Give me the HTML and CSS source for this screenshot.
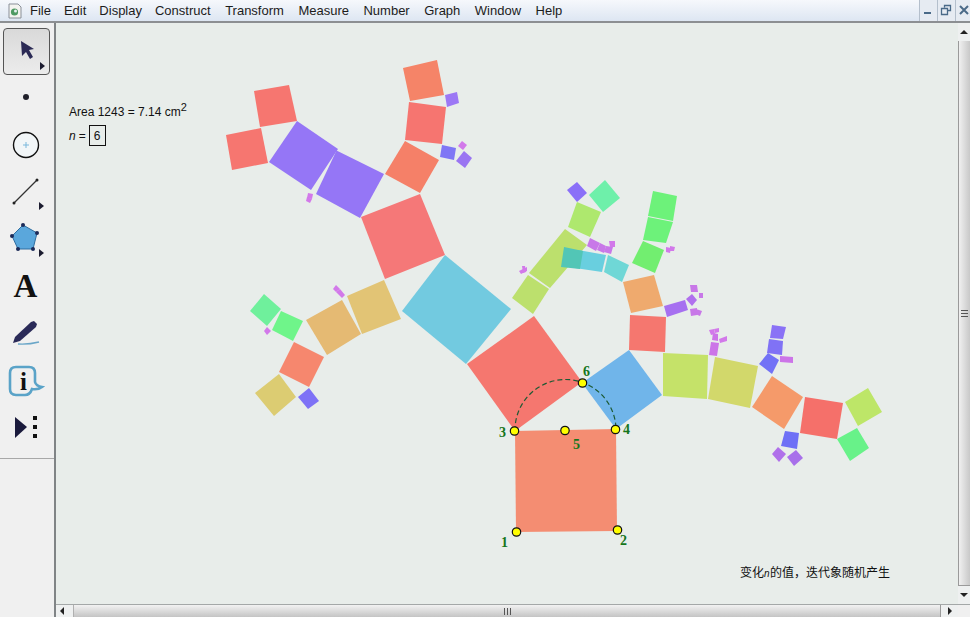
FILE: index.html
```html
<!DOCTYPE html>
<html lang="en">
<head>
    <meta charset="UTF-8">
    <title>Sketchpad</title>
    <link rel="stylesheet" href="styles.css">
</head>
<body>
    <div class="app">
        <div class="menubar">
            <svg class="app-icon" viewBox="0 0 14 16">
                <path d="M1 1H10L13 4V15H1Z" fill="#f4f4f0" stroke="#8a8f98"/>
                <circle cx="6.5" cy="9" r="3.6" fill="#4f9a62"/>
                <circle cx="7.5" cy="8" r="1.5" fill="#e8f0f0"/>
            </svg>
            <div class="menu">
                <span>File</span><span>Edit</span><span>Display</span><span>Construct</span><span>Transform</span><span>Measure</span><span>Number</span><span>Graph</span><span>Window</span><span>Help</span>
            </div>
            <div class="win-buttons">
                <div class="win-btn">
                    <svg viewBox="0 0 18 20"><rect x="5" y="12" width="7" height="2" fill="#4a6a88"/></svg>
                </div>
                <div class="win-btn">
                    <svg viewBox="0 0 18 20"><path d="M7.5 7.5V5.5H13.5V10.5H11M4.5 8.5H10.5V14.5H4.5Z" fill="none" stroke="#4a6a88" stroke-width="1.3"/></svg>
                </div>
                <div class="win-btn">
                    <svg viewBox="0 0 18 20"><path d="M5 6L13 14M13 6L5 14" fill="none" stroke="#4a6a88" stroke-width="2"/></svg>
                </div>
            </div>
        </div>

        <div class="main">
            <div class="toolbar">
                <div class="tools">
                    <div class="tool selected">
                        <svg viewBox="0 0 47 47">
                            <polygon points="18,13 19,28 23,24 27,31 30,29 26,22 31,21" fill="#2b2a55"/>
                            <polygon points="37,34 42,38 37,42" fill="#1c1c30"/>
                        </svg>
                    </div>
                    <div class="tool">
                        <svg viewBox="0 0 47 47"><circle cx="23" cy="22" r="3" fill="#20202a"/></svg>
                    </div>
                    <div class="tool">
                        <svg viewBox="0 0 47 47">
                            <circle cx="23" cy="23" r="12.5" fill="#f2f6f8" stroke="#111" stroke-width="1.4"/>
                            <path d="M23 20V26M20 23H26" stroke="#7ab8dc" stroke-width="1"/>
                        </svg>
                    </div>
                    <div class="tool">
                        <svg viewBox="0 0 47 47">
                            <path d="M11 34L34 11" stroke="#333" stroke-width="1.2"/>
                            <circle cx="11" cy="34" r="1.5" fill="#222"/>
                            <circle cx="34" cy="11" r="1.5" fill="#222"/>
                            <polygon points="36,33 41,37 36,41" fill="#1c1c30"/>
                        </svg>
                    </div>
                    <div class="tool">
                        <svg viewBox="0 0 47 47">
                            <polygon points="20,9 34,17 30,33 15,33 9,20" fill="#5aa7dc" stroke="#2e6da0"/>
                            <circle cx="20" cy="9" r="2" fill="#1c2a58"/>
                            <circle cx="34" cy="17" r="2" fill="#1c2a58"/>
                            <circle cx="30" cy="33" r="2" fill="#1c2a58"/>
                            <circle cx="15" cy="33" r="2" fill="#1c2a58"/>
                            <circle cx="9" cy="20" r="2" fill="#1c2a58"/>
                            <polygon points="36,33 41,37 36,41" fill="#1c1c30"/>
                        </svg>
                    </div>
                    <div class="tool text-tool">A</div>
                    <div class="tool">
                        <svg viewBox="0 0 47 47">
                            <polygon points="10,33 12,27 28,12 31,11 34,14 33,17 17,31" fill="#2a2a58"/>
                            <path d="M15 34C22 34.500 28 34 36 32" fill="none" stroke="#6aa6c8" stroke-width="1.4"/>
                        </svg>
                    </div>
                    <div class="tool">
                        <svg viewBox="0 0 47 47">
                            <path d="M13 10H26Q32 10 32 16V25Q33 29 39 30Q35 33 29 32Q27 38 22 38H13Q7 38 7 32V16Q7 10 13 10Z" fill="none" stroke="#5aa3c8" stroke-width="2.6"/>
                            <text x="17" y="33" class="info-i">i</text>
                        </svg>
                    </div>
                    <div class="tool">
                        <svg viewBox="0 0 47 47">
                            <polygon points="12,13 24,23 12,34" fill="#1a1a3c"/>
                            <rect x="30" y="12" width="4" height="4" fill="#111"/>
                            <rect x="30" y="21" width="4" height="4" fill="#111"/>
                            <rect x="30" y="30" width="4" height="4" fill="#111"/>
                        </svg>
                    </div>
                </div>
            </div>

            <div class="work">
                <div class="work-row">
                    <div class="canvas">
                        <svg class="sketch" viewBox="56 23 902 581">
                            <!-- bottom square and the two on top of it -->
                            <polygon fill="#f48d72" points="515,431 616,429 617,531 516,532"/>
                            <polygon fill="#f5776f" points="534,316 582,382 515,431 467,364"/>
                            <polygon fill="#70b5ea" points="582,383 629,350 662,395 616,429"/>

                            <!-- left branch -->
                            <polygon fill="#72cae0" points="445,255 511,309 466,364 402,311"/>
                            <polygon fill="#f57878" points="361,217 420,194 445,255 385,279"/>
                            <polygon fill="#9576f6" points="297,121 338,149 311,190 269,162"/>
                            <polygon fill="#9576f6" points="336.500,150.500 384,174 360,218 316,194"/>
                            <polygon fill="#f58068" points="385,174 405,141 439,160 420,193"/>
                            <polygon fill="#f67570" points="409,102 446,107 442,144 405,140"/>
                            <polygon fill="#f58468" points="403,68 437,60 444,95 410,101"/>
                            <polygon fill="#9c78f5" points="445,95 457,92 459,103 447,107"/>
                            <polygon fill="#7f76f5" points="442,145 456,148 454,160 440,157"/>
                            <polygon fill="#9a75f2" points="464,151 472,158 465,168 456,161"/>
                            <polygon fill="#d279ea" points="462,141 467,145 463,150 458,146"/>
                            <polygon fill="#f67670" points="254,91 289,85 297,121 260,127"/>
                            <polygon fill="#f67670" points="226,135 261,128 268,163 232,170"/>
                            <polygon fill="#d279ea" points="308,193 313,194 312,199 307,198"/>
                            <polygon fill="#d279ea" points="307,197 312,199 310,203 306,201"/>

                            <!-- gold branch -->
                            <polygon fill="#e2c475" points="384,280 401,319 362,334 347,296"/>
                            <polygon fill="#e5ba73" points="342,300 361,334 327,355 306,320"/>
                            <polygon fill="#f6876e" points="294,342 324,357 309,387 279,372"/>
                            <polygon fill="#dccc72" points="279,374 296,397 274,416 255,393"/>
                            <polygon fill="#7e72f6" points="309,388 319,401 308,409 298,397"/>
                            <polygon fill="#6ff09c" points="264,294 281,309 267,326 250,311"/>
                            <polygon fill="#6ff58a" points="281,311 303,321 293,341 272,330"/>
                            <polygon fill="#d279ea" points="267,327 271,331 267,335 264,331"/>
                            <polygon fill="#d279ea" points="336,285 340,289 336,292 333,289"/>
                            <polygon fill="#d279ea" points="340,289 345,295 342,298 336,292"/>

                            <!-- right branch, upper part -->
                            <polygon fill="#bce06d" points="512,298 528,275 549,289 533,314"/>
                            <polygon fill="#bce06d" points="529,273 565,229 587,245 550,288"/>
                            <polygon fill="#aee86e" points="577,202 601,212 590,237 568,227"/>
                            <polygon fill="#6ef0aa" points="589,195 605,180 620,198 603,212"/>
                            <polygon fill="#8a70f8" points="567,190 577,182 587,193 577,202"/>
                            <polygon fill="#69cfdf" points="578,250 606,255 602,272 575,268"/>
                            <polygon fill="#52c6b6" points="564,247 583,251 580,269 561,267"/>
                            <polygon fill="#6fd7d6" points="608,255 629,265 622,282 604,272"/>
                            <polygon fill="#6df27a" points="653,191 677,196 673,221 648,216"/>
                            <polygon fill="#6df27a" points="648,217 673,222 666,243 643,240"/>
                            <polygon fill="#72ee70" points="643,241 664,250 655,273 632,263"/>
                            <polygon fill="#efaa6e" points="623,282 654,275 663,306 631,313"/>
                            <polygon fill="#f5776f" points="630,315 666,317 665,352 629,350"/>
                            <polygon fill="#a670f0" points="664,306 685,300 688,310 667,317"/>
                            <polygon fill="#b070ee" points="686,299 692,294 697,300 692,306"/>
                            <polygon fill="#c878e8" points="690,285 697,285 698,292 691,292"/>
                            <polygon fill="#c878e8" points="699,293 703,293 703,298 699,298"/>
                            <polygon fill="#c878e8" points="690,309 697,308 697,315 691,316"/>
                            <polygon fill="#c878e8" points="696,309 702,311 700,316 695,314"/>
                            <polygon fill="#c878e8" points="590,238 600,243 596,251 587,246"/>
                            <polygon fill="#c878e8" points="600,243 606,246 604,253 597,250"/>
                            <polygon fill="#c878e8" points="606,246 613,247 611,254 604,252"/>
                            <polygon fill="#d279ea" points="609,241 615,241 615,247 610,247"/>
                            <polygon fill="#d279ea" points="666,247 671,248 670,253 666,252"/>
                            <polygon fill="#d279ea" points="670,246 675,247 674,251 670,251"/>
                            <polygon fill="#d279ea" points="519,271 527,267 527,271 521,274"/>
                            <polygon fill="#d279ea" points="522,266 525,266 526,272 523,273"/>

                            <!-- right branch, lower part -->
                            <polygon fill="#c5e269" points="663,353 708,355 707,399 663,396"/>
                            <polygon fill="#d2d86b" points="715,357 758,366 750,408 708,399"/>
                            <polygon fill="#f59a6a" points="772,376 803,397 784,429 752,407"/>
                            <polygon fill="#f5706a" points="805,397 843,403 837,439 800,433"/>
                            <polygon fill="#bde668" points="845,402 868,388 882,412 858,426"/>
                            <polygon fill="#68f289" points="837,439 857,428 869,448 850,461"/>
                            <polygon fill="#6e70f6" points="785,431 799,433 797,449 781,446"/>
                            <polygon fill="#b070ea" points="778,447 786,454 779,462 772,454"/>
                            <polygon fill="#a870ea" points="796,450 803,458 794,466 787,457"/>
                            <polygon fill="#8a72f6" points="772,325 786,327 783,339 770,338"/>
                            <polygon fill="#8072f5" points="769,339 783,341 782,355 767,353"/>
                            <polygon fill="#7272f6" points="768,353 779,360 772,374 759,364"/>
                            <polygon fill="#cc75e8" points="780,356 793,357 793,363 780,362"/>
                            <polygon fill="#cc75e8" points="711,342 719,343 717,356 709,355"/>
                            <polygon fill="#cc75e8" points="713,333 718,334 718,341 712,340"/>
                            <polygon fill="#d279ea" points="709,330 714,329 715,334 711,335"/>
                            <polygon fill="#d279ea" points="714,329 719,328 719,332 715,333"/>
                            <polygon fill="#d279ea" points="719,339 727,336 727,341 720,343"/>

                            <!-- construction on top -->
                            <path class="arc" d="M515 431A50.500 50.500 0 0 1 616 429"/>
                            <circle class="pt" cx="516.500" cy="532" r="4.200"/>
                            <circle class="pt" cx="617.500" cy="530" r="4.200"/>
                            <circle class="pt" cx="514.500" cy="431" r="4.200"/>
                            <circle class="pt" cx="615.500" cy="429.500" r="4.200"/>
                            <circle class="pt" cx="565" cy="430.500" r="4.200"/>
                            <circle class="pt" cx="582.500" cy="383" r="4.200"/>
                            <text class="pt-label" x="501" y="547">1</text>
                            <text class="pt-label" x="620" y="545">2</text>
                            <text class="pt-label" x="499" y="437">3</text>
                            <text class="pt-label" x="623" y="434">4</text>
                            <text class="pt-label" x="573" y="449">5</text>
                            <text class="pt-label" x="583" y="376">6</text>
                        </svg>

                        <div class="measure">Area 1243 = 7.14 cm<sup>2</sup></div>
                        <div class="param"><i>n</i> = <span class="param-box">6</span></div>
                        <div class="note">变化<i>n</i>的值，迭代象随机产生</div>
                    </div>
                    <div class="vscroll">
                        <div class="arrow-btn"><span class="tri tri-up"></span></div>
                        <div class="vthumb"><span class="vgrip"></span></div>
                        <div class="arrow-btn"><span class="tri tri-down"></span></div>
                    </div>
                </div>
                <div class="hscroll">
                    <div class="arrow-btn-h first"><span class="tri tri-left"></span></div>
                    <div class="hthumb"><span class="hgrip"></span></div>
                    <div class="arrow-btn-h"><span class="tri tri-right"></span></div>
                    <div class="corner"></div>
                </div>
            </div>
        </div>
    </div>
</body>
</html>
```

FILE: styles.css
```css
body {
    margin: 0;
    font-family: "Liberation Sans", Arial, sans-serif;
    background: #f0f0f0;
}

.app {
    width: 970px;
    height: 617px;
    display: flex;
    flex-direction: column;
    overflow: hidden;
}

.menubar {
    height: 21px;
    display: flex;
    align-items: center;
    background: linear-gradient(#f6f8fc, #dde6f2);
    border-bottom: 2px solid #8c8f92;
}

.app-icon {
    width: 14px;
    height: 16px;
    margin-left: 8px;
}

.menu {
    flex: 1;
    display: flex;
    gap: 13px;
    margin-left: 8px;
    font-size: 13px;
    color: #1c1c1c;
}

.menu span:nth-child(n+5) {
    margin-left: 1.5px;
}

.win-buttons {
    display: flex;
    align-self: stretch;
}

.win-btn {
    width: 18px;
    box-sizing: border-box;
    border-left: 1px solid #b4bfcc;
    background: #e6ebf2;
}

.win-btn:last-child {
    width: 15px;
}

.win-btn svg {
    display: block;
    width: 18px;
    height: 20px;
    margin-left: -1px;
}

.main {
    flex: 1;
    display: flex;
    min-height: 0;
}

.toolbar {
    width: 54px;
    border-right: 2px solid #808486;
    background: #f0f0f0;
}

.tools {
    padding: 5px 4px 7px 3px;
    border-bottom: 1px solid #a8a8a8;
}

.tool {
    width: 47px;
    height: 47px;
    box-sizing: border-box;
}

.tool svg {
    display: block;
    width: 47px;
    height: 47px;
}

.tool.selected {
    border: 1px solid #555;
    border-radius: 4px;
    background: linear-gradient(#d9d9d9, #ececec);
}

.tool.selected svg {
    margin: -1px;
}

.text-tool {
    display: flex;
    align-items: center;
    justify-content: center;
    padding-right: 2px;
    font-family: "Liberation Serif", serif;
    font-weight: bold;
    font-size: 33px;
    color: #111;
}

.info-i {
    font-family: "Liberation Serif", serif;
    font-weight: bold;
    font-size: 25px;
    fill: #111;
}

.work {
    flex: 1;
    display: flex;
    flex-direction: column;
    min-width: 0;
}

.work-row {
    flex: 1;
    display: flex;
    min-height: 0;
}

.canvas {
    flex: 1;
    position: relative;
    background: #e8edea;
    overflow: hidden;
}

.sketch {
    position: absolute;
    top: 0;
    left: 0;
    width: 902px;
    height: 581px;
}

.arc {
    fill: none;
    stroke: #1d5a34;
    stroke-width: 1.2;
    stroke-dasharray: 5 3;
}

.pt {
    fill: #ffff00;
    stroke: #111;
    stroke-width: 1.2;
}

.pt-label {
    font-family: "Liberation Serif", serif;
    font-weight: bold;
    font-size: 14px;
    fill: #16761c;
}

.measure,
.param,
.note {
    position: absolute;
    font-size: 12px;
    color: #111;
    white-space: nowrap;
}

.measure {
    left: 13px;
    top: 82px;
}

.measure sup {
    font-size: 11px;
    line-height: 0;
}

.param {
    left: 13px;
    top: 102px;
    display: flex;
    align-items: center;
    gap: 3px;
}

.param-box {
    width: 15px;
    height: 19px;
    border: 1px solid #111;
    display: flex;
    align-items: center;
    justify-content: center;
}

.note {
    left: 684px;
    top: 540px;
    font-family: "Noto Sans CJK SC", sans-serif;
}

.note i {
    display: inline-block;
    width: 6px;
    font-size: 10px;
    font-family: "Liberation Sans", sans-serif;
}

.vscroll {
    width: 12px;
    display: flex;
    flex-direction: column;
    background: #eef0f0;
}

.arrow-btn {
    height: 18px;
    display: flex;
    align-items: center;
    justify-content: center;
}

.vthumb {
    flex: 1;
    display: flex;
    align-items: center;
    justify-content: center;
    background: linear-gradient(90deg, #f0f0f0, #c8c8c8);
    border-left: 1px solid #9a9a9a;
    border-bottom: 1px solid #9a9a9a;
}

.vgrip {
    width: 7px;
    height: 7px;
    background: repeating-linear-gradient(#555 0 1px, transparent 1px 3px);
}

.hscroll {
    height: 13px;
    display: flex;
    border-top: 1px solid #a4a8a8;
    box-sizing: border-box;
    background: #eef0f0;
}

.arrow-btn-h {
    width: 17px;
    display: flex;
    align-items: center;
    justify-content: center;
}

.arrow-btn-h.first {
    box-sizing: border-box;
    padding-right: 5px;
}

.hthumb {
    flex: 1;
    display: flex;
    align-items: center;
    justify-content: center;
    background: linear-gradient(#f2f2f2, #c4c4c4);
    border-left: 1px solid #b0b0b0;
    border-right: 1px solid #9a9a9a;
}

.hgrip {
    width: 7px;
    height: 7px;
    background: repeating-linear-gradient(90deg, #555 0 1px, transparent 1px 3px);
}

.corner {
    width: 12px;
    background: #f0f0f0;
}

.tri {
    width: 0;
    height: 0;
    border: 4px solid transparent;
}

.tri-up {
    border-top: 0;
    border-bottom-color: #222;
}

.tri-down {
    border-bottom: 0;
    border-top-color: #222;
}

.tri-left {
    border-left: 0;
    border-right-color: #222;
}

.tri-right {
    border-right: 0;
    border-left-color: #222;
}
```
